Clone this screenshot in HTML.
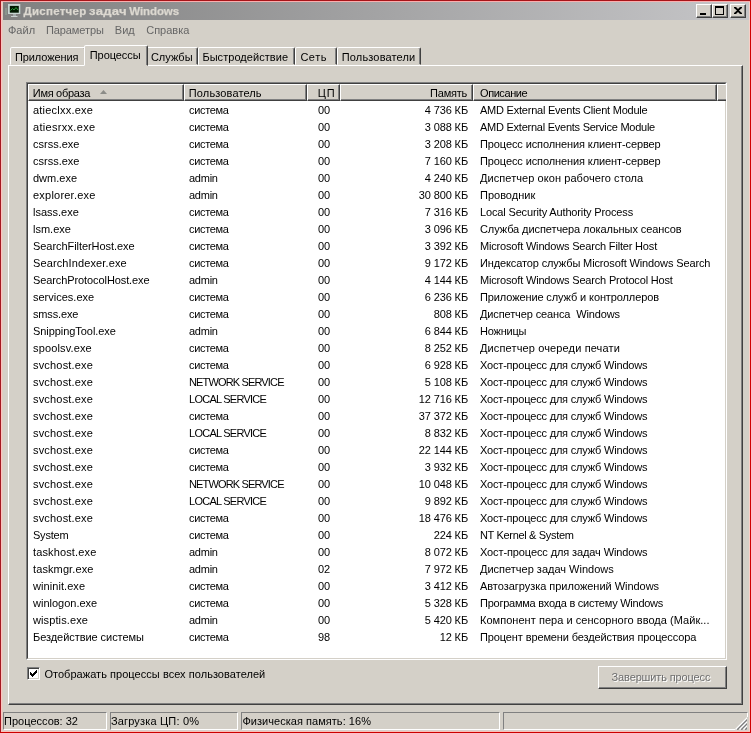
<!DOCTYPE html>
<html lang="ru"><head><meta charset="utf-8"><title>Диспетчер задач Windows</title>
<style>
*{box-sizing:border-box;margin:0;padding:0}
html,body{width:751px;height:733px;overflow:hidden;background:#d4d0c8}
body{position:relative;will-change:transform;font-family:"Liberation Sans",sans-serif;font-size:11px;color:#000;line-height:13px}
.a{position:absolute;white-space:pre}
.tt{color:#dcd8d0;-webkit-text-stroke:.25px #dcd8d0;font-weight:bold;font-size:11.5px;z-index:5;letter-spacing:.25px}
.mn{color:#666}
.tb{z-index:5}
.bt{color:#6e6e6e;text-shadow:1px 1px 0 #fff;z-index:5}
#title{left:3px;top:2px;width:746px;height:18px;background:linear-gradient(90deg,#808080,#c6c6c8)}
.cb{top:4px;width:16px;height:14px;background:#d4d0c8;border:1px solid;border-color:#fff #404040 #404040 #fff;box-shadow:inset -1px -1px 0 #808080}
.tab{top:47px;height:18px;border:1px solid;border-color:#fff #404040 transparent #fff;border-radius:2px 2px 0 0;box-shadow:inset -1px 0 0 #808080;background:#d4d0c8}
#tabsel{top:45px;height:21px;z-index:3}
#panel{left:8px;top:65px;width:735px;height:640px;border:1px solid;border-color:#fff #404040 #404040 #fff;box-shadow:inset -1px -1px 0 #808080}
#list{left:26px;top:82px;width:701px;height:578px;background:#fff;border:1px solid;border-color:#808080 #fff #fff #808080}
#listin{left:27px;top:83px;width:699px;height:576px;border:1px solid;border-color:#404040 #d4d0c8 #d4d0c8 #404040}
.hd{top:84px;height:17px;background:#d4d0c8;border:1px solid;border-color:#fff #404040 #404040 #fff;box-shadow:inset -1px -1px 0 #808080}
.r{left:0;height:17px;width:751px}
.r span{position:absolute;top:2px;white-space:pre}
.c1{left:33px}.c2{left:189px}.c3{left:318px}.c4{right:283px;text-align:right;letter-spacing:-0.12px}.c5{left:480px}
#chk{left:27px;top:667px;width:13px;height:13px;background:#fff;border:1px solid;border-color:#808080 #fff #fff #808080;box-shadow:inset 1px 1px 0 #404040,inset -1px -1px 0 #d4d0c8}
#btn{left:598px;top:666px;width:129px;height:23px;border:1px solid;border-color:#fff #404040 #404040 #fff;box-shadow:inset -1px -1px 0 #808080}
.sp{top:712px;height:18px;border:1px solid;border-color:#808080 #fff #fff #808080}
.red{background:#e60000;z-index:9}
.pk{background:#f6e4e0;z-index:8}
</style></head><body>

<div class="a" id="title"></div>
<svg class="a" style="left:5px;top:3px" width="18" height="16" viewBox="0 0 18 16"><rect x="0" y="5" width="2" height="7" fill="#90a898" opacity=".55"/><rect x="3" y="1" width="12.300" height="10" fill="#c6d4d0"/><rect x="4.800" y="2.900" width="9" height="6.800" fill="#001800"/><path d="M5.500 7.500 L7.500 5.500 L9 7 L11 4.500 L13 7" stroke="#2a9c3a" stroke-width="1" fill="none"/><rect x="8" y="11" width="3" height="2" fill="#a4acac"/><rect x="6" y="13" width="6.500" height="1" fill="#c8d0d0"/></svg>
<div class="a cb" style="left:696px"><svg width="14" height="12" style="display:block"><rect x="3" y="8" width="6" height="2" fill="#000"/></svg></div>
<div class="a cb" style="left:712px"><svg width="14" height="12" style="display:block"><rect x="2.5" y="1.5" width="8" height="8" fill="none" stroke="#000"/><rect x="2" y="1" width="9" height="2" fill="#000"/></svg></div>
<div class="a cb" style="left:730px"><svg width="14" height="12" style="display:block"><path d="M3 2h2l2 2 2-2h2v1l-3 2.500 3 2.500v1h-2l-2-2-2 2h-2v-1l3-2.500-3-2.500z" fill="#000"/></svg></div>
<div class="a" id="panel"></div>
<div class="a tab" style="left:10px;width:76px"></div>
<div class="a tab" style="left:146px;width:52px"></div>
<div class="a tab" style="left:198px;width:97px"></div>
<div class="a tab" style="left:295px;width:42px"></div>
<div class="a tab" style="left:337px;width:84px"></div>
<div class="a tab" id="tabsel" style="left:84px;width:64px"></div>
<div class="a" id="list"></div><div class="a" id="listin"></div>
<div class="a hd" style="left:28px;width:156px"></div>
<div class="a hd" style="left:184px;width:123px"></div>
<div class="a hd" style="left:307px;width:33px"></div>
<div class="a hd" style="left:340px;width:133px"></div>
<div class="a hd" style="left:473px;width:244px"></div>
<div class="a hd" style="left:717px;width:9px;border-right:0;box-shadow:inset 0 -1px 0 #808080"></div>
<svg class="a" style="left:100px;top:90px" width="7" height="4"><path d="M0 4 L3.5 0 L7 4 Z" fill="#8c8c88"/></svg>
<div class="a r" style="top:102px"><span class="c1" style="letter-spacing:0.218px">atieclxx.exe</span><span class="c2" style="letter-spacing:-0.333px">система</span><span class="c3">00</span><span class="c4">4 736 КБ</span><span class="c5" style="letter-spacing:-0.225px">AMD External Events Client Module</span></div>
<div class="a r" style="top:119px"><span class="c1" style="letter-spacing:0.309px">atiesrxx.exe</span><span class="c2" style="letter-spacing:-0.333px">система</span><span class="c3">00</span><span class="c4">3 088 КБ</span><span class="c5" style="letter-spacing:-0.248px">AMD External Events Service Module</span></div>
<div class="a r" style="top:136px"><span class="c1">csrss.exe</span><span class="c2" style="letter-spacing:-0.333px">система</span><span class="c3">00</span><span class="c4">3 208 КБ</span><span class="c5" style="letter-spacing:-0.103px">Процесс исполнения клиент-сервер</span></div>
<div class="a r" style="top:153px"><span class="c1">csrss.exe</span><span class="c2" style="letter-spacing:-0.333px">система</span><span class="c3">00</span><span class="c4">7 160 КБ</span><span class="c5" style="letter-spacing:-0.103px">Процесс исполнения клиент-сервер</span></div>
<div class="a r" style="top:170px"><span class="c1">dwm.exe</span><span class="c2" style="letter-spacing:-0.250px">admin</span><span class="c3">00</span><span class="c4">4 240 КБ</span><span class="c5" style="letter-spacing:0.071px">Диспетчер окон рабочего стола</span></div>
<div class="a r" style="top:187px"><span class="c1" style="letter-spacing:0.218px">explorer.exe</span><span class="c2" style="letter-spacing:-0.250px">admin</span><span class="c3">00</span><span class="c4">30 800 КБ</span><span class="c5">Проводник</span></div>
<div class="a r" style="top:204px"><span class="c1">lsass.exe</span><span class="c2" style="letter-spacing:-0.333px">система</span><span class="c3">00</span><span class="c4">7 316 КБ</span><span class="c5" style="letter-spacing:-0.148px">Local Security Authority Process</span></div>
<div class="a r" style="top:221px"><span class="c1">lsm.exe</span><span class="c2" style="letter-spacing:-0.333px">система</span><span class="c3">00</span><span class="c4">3 096 КБ</span><span class="c5" style="letter-spacing:-0.085px">Служба диспетчера локальных сеансов</span></div>
<div class="a r" style="top:238px"><span class="c1" style="letter-spacing:-0.058px">SearchFilterHost.exe</span><span class="c2" style="letter-spacing:-0.333px">система</span><span class="c3">00</span><span class="c4">3 392 КБ</span><span class="c5" style="letter-spacing:-0.177px">Microsoft Windows Search Filter Host</span></div>
<div class="a r" style="top:255px"><span class="c1" style="letter-spacing:0.119px">SearchIndexer.exe</span><span class="c2" style="letter-spacing:-0.333px">система</span><span class="c3">00</span><span class="c4">9 172 КБ</span><span class="c5" style="letter-spacing:-0.124px">Индексатор службы Microsoft Windows Search</span></div>
<div class="a r" style="top:272px"><span class="c1" style="letter-spacing:-0.095px">SearchProtocolHost.exe</span><span class="c2" style="letter-spacing:-0.250px">admin</span><span class="c3">00</span><span class="c4">4 144 КБ</span><span class="c5" style="letter-spacing:-0.173px">Microsoft Windows Search Protocol Host</span></div>
<div class="a r" style="top:289px"><span class="c1">services.exe</span><span class="c2" style="letter-spacing:-0.333px">система</span><span class="c3">00</span><span class="c4">6 236 КБ</span><span class="c5" style="letter-spacing:-0.110px">Приложение служб и контроллеров</span></div>
<div class="a r" style="top:306px"><span class="c1" style="letter-spacing:-0.157px">smss.exe</span><span class="c2" style="letter-spacing:-0.333px">система</span><span class="c3">00</span><span class="c4">808 КБ</span><span class="c5" style="letter-spacing:-0.121px">Диспетчер сеанса  Windows</span></div>
<div class="a r" style="top:323px"><span class="c1" style="letter-spacing:-0.060px">SnippingTool.exe</span><span class="c2" style="letter-spacing:-0.250px">admin</span><span class="c3">00</span><span class="c4">6 844 КБ</span><span class="c5" style="letter-spacing:-0.200px">Ножницы</span></div>
<div class="a r" style="top:340px"><span class="c1" style="letter-spacing:0.140px">spoolsv.exe</span><span class="c2" style="letter-spacing:-0.333px">система</span><span class="c3">00</span><span class="c4">8 252 КБ</span><span class="c5" style="letter-spacing:0.135px">Диспетчер очереди печати</span></div>
<div class="a r" style="top:357px"><span class="c1" style="letter-spacing:0.180px">svchost.exe</span><span class="c2" style="letter-spacing:-0.333px">система</span><span class="c3">00</span><span class="c4">6 928 КБ</span><span class="c5" style="letter-spacing:-0.186px">Хост-процесс для служб Windows</span></div>
<div class="a r" style="top:374px"><span class="c1" style="letter-spacing:0.180px">svchost.exe</span><span class="c2" style="letter-spacing:-0.850px">NETWORK SERVICE</span><span class="c3">00</span><span class="c4">5 108 КБ</span><span class="c5" style="letter-spacing:-0.186px">Хост-процесс для служб Windows</span></div>
<div class="a r" style="top:391px"><span class="c1" style="letter-spacing:0.180px">svchost.exe</span><span class="c2" style="letter-spacing:-0.742px">LOCAL SERVICE</span><span class="c3">00</span><span class="c4">12 716 КБ</span><span class="c5" style="letter-spacing:-0.186px">Хост-процесс для служб Windows</span></div>
<div class="a r" style="top:408px"><span class="c1" style="letter-spacing:0.180px">svchost.exe</span><span class="c2" style="letter-spacing:-0.333px">система</span><span class="c3">00</span><span class="c4">37 372 КБ</span><span class="c5" style="letter-spacing:-0.186px">Хост-процесс для служб Windows</span></div>
<div class="a r" style="top:425px"><span class="c1" style="letter-spacing:0.180px">svchost.exe</span><span class="c2" style="letter-spacing:-0.742px">LOCAL SERVICE</span><span class="c3">00</span><span class="c4">8 832 КБ</span><span class="c5" style="letter-spacing:-0.186px">Хост-процесс для служб Windows</span></div>
<div class="a r" style="top:442px"><span class="c1" style="letter-spacing:0.180px">svchost.exe</span><span class="c2" style="letter-spacing:-0.333px">система</span><span class="c3">00</span><span class="c4">22 144 КБ</span><span class="c5" style="letter-spacing:-0.186px">Хост-процесс для служб Windows</span></div>
<div class="a r" style="top:459px"><span class="c1" style="letter-spacing:0.180px">svchost.exe</span><span class="c2" style="letter-spacing:-0.333px">система</span><span class="c3">00</span><span class="c4">3 932 КБ</span><span class="c5" style="letter-spacing:-0.186px">Хост-процесс для служб Windows</span></div>
<div class="a r" style="top:476px"><span class="c1" style="letter-spacing:0.180px">svchost.exe</span><span class="c2" style="letter-spacing:-0.850px">NETWORK SERVICE</span><span class="c3">00</span><span class="c4">10 048 КБ</span><span class="c5" style="letter-spacing:-0.186px">Хост-процесс для служб Windows</span></div>
<div class="a r" style="top:493px"><span class="c1" style="letter-spacing:0.180px">svchost.exe</span><span class="c2" style="letter-spacing:-0.742px">LOCAL SERVICE</span><span class="c3">00</span><span class="c4">9 892 КБ</span><span class="c5" style="letter-spacing:-0.186px">Хост-процесс для служб Windows</span></div>
<div class="a r" style="top:510px"><span class="c1" style="letter-spacing:0.180px">svchost.exe</span><span class="c2" style="letter-spacing:-0.333px">система</span><span class="c3">00</span><span class="c4">18 476 КБ</span><span class="c5" style="letter-spacing:-0.186px">Хост-процесс для служб Windows</span></div>
<div class="a r" style="top:527px"><span class="c1" style="letter-spacing:-0.220px">System</span><span class="c2" style="letter-spacing:-0.333px">система</span><span class="c3">00</span><span class="c4">224 КБ</span><span class="c5" style="letter-spacing:-0.329px">NT Kernel &amp; System</span></div>
<div class="a r" style="top:544px"><span class="c1" style="letter-spacing:0.136px">taskhost.exe</span><span class="c2" style="letter-spacing:-0.250px">admin</span><span class="c3">00</span><span class="c4">8 072 КБ</span><span class="c5" style="letter-spacing:-0.110px">Хост-процесс для задач Windows</span></div>
<div class="a r" style="top:561px"><span class="c1" style="letter-spacing:0.110px">taskmgr.exe</span><span class="c2" style="letter-spacing:-0.250px">admin</span><span class="c3">02</span><span class="c4">7 972 КБ</span><span class="c5">Диспетчер задач Windows</span></div>
<div class="a r" style="top:578px"><span class="c1" style="letter-spacing:0.070px">wininit.exe</span><span class="c2" style="letter-spacing:-0.333px">система</span><span class="c3">00</span><span class="c4">3 412 КБ</span><span class="c5" style="letter-spacing:-0.033px">Автозагрузка приложений Windows</span></div>
<div class="a r" style="top:595px"><span class="c1">winlogon.exe</span><span class="c2" style="letter-spacing:-0.333px">система</span><span class="c3">00</span><span class="c4">5 328 КБ</span><span class="c5" style="letter-spacing:-0.250px">Программа входа в систему Windows</span></div>
<div class="a r" style="top:612px"><span class="c1" style="letter-spacing:0.110px">wisptis.exe</span><span class="c2" style="letter-spacing:-0.250px">admin</span><span class="c3">00</span><span class="c4">5 420 КБ</span><span class="c5" style="letter-spacing:0.037px">Компонент пера и сенсорного ввода (Майк...</span></div>
<div class="a r" style="top:629px"><span class="c1" style="letter-spacing:-0.056px">Бездействие системы</span><span class="c2" style="letter-spacing:-0.333px">система</span><span class="c3">98</span><span class="c4">12 КБ</span><span class="c5" style="letter-spacing:-0.119px">Процент времени бездействия процессора</span></div>
<div class="a" id="chk"><svg width="11" height="11" style="display:block"><path d="M2 4h1v3h-1zM3 5h1v3h-1zM4 6h1v3h-1zM5 5h1v3h-1zM6 4h1v3h-1zM7 3h1v3h-1zM8 2h1v3h-1z" fill="#000" shape-rendering="crispEdges"/></svg></div>
<div class="a" id="btn"></div>
<div class="a sp" style="left:3px;width:104px"></div>
<div class="a sp" style="left:110px;width:128px"></div>
<div class="a sp" style="left:241px;width:259px"></div>
<div class="a sp" style="left:503px;width:245px"></div>
<svg class="a" style="left:735px;top:717px;z-index:4" width="13" height="13" viewBox="0 0 13 13"><rect x="0" y="1" width="12" height="12" fill="#d4d0c8"/><path d="M2.0 12.500L12.500 2.0" stroke="#7c7c7c" stroke-width="2.1"/><path d="M6.0 12.500L12.500 6.0" stroke="#7c7c7c" stroke-width="2.1"/><path d="M10.0 12.500L12.500 10.0" stroke="#7c7c7c" stroke-width="2.1"/><path d="M0.5 12.500L12.500 0.5" stroke="#fff" stroke-width="1.2"/><path d="M4.5 12.500L12.500 4.5" stroke="#fff" stroke-width="1.2"/><path d="M8.5 12.500L12.500 8.5" stroke="#fff" stroke-width="1.2"/><rect x="12" y="0" width="1" height="13" fill="#d4d0c8"/></svg>
<div class="a mn" style="left:8.00px;top:24px">Файл</div>
<div class="a mn" style="left:46.00px;top:24px;letter-spacing:-0.100px">Параметры</div>
<div class="a mn" style="left:114.80px;top:24px">Вид</div>
<div class="a mn" style="left:146.20px;top:24px">Справка</div>
<div class="a tb" style="left:14.90px;top:51px;letter-spacing:-0.078px">Приложения</div>
<div class="a tb" style="left:89.80px;top:49px;letter-spacing:-0.086px">Процессы</div>
<div class="a tb" style="left:150.90px;top:51px">Службы</div>
<div class="a tb" style="left:202.40px;top:51px;letter-spacing:0.054px">Быстродействие</div>
<div class="a tb" style="left:300.40px;top:51px;letter-spacing:0.533px">Сеть</div>
<div class="a tb" style="left:341.80px;top:51px;letter-spacing:0.145px">Пользователи</div>
<div class="a tb" style="left:32.80px;top:87px;letter-spacing:-0.300px">Имя образа</div>
<div class="a tb" style="left:188.80px;top:87px;letter-spacing:0.127px">Пользователь</div>
<div class="a tb" style="left:317.80px;top:87px;letter-spacing:0.700px">ЦП</div>
<div class="a tb" style="left:430.10px;top:87px;letter-spacing:-0.240px">Память</div>
<div class="a tb" style="left:480.00px;top:87px;letter-spacing:-0.429px">Описание</div>
<div class="a tb" style="left:44.40px;top:668px;letter-spacing:0.043px">Отображать процессы всех пользователей</div>
<div class="a bt" style="left:611.60px;top:671px;letter-spacing:-0.138px">Завершить процесс</div>
<div class="a tb" style="left:4.10px;top:715px">Процессов: 32</div>
<div class="a tb" style="left:110.90px;top:715px;letter-spacing:0.179px">Загрузка ЦП: 0%</div>
<div class="a tb" style="left:242.40px;top:715px;letter-spacing:0.038px">Физическая память: 16%</div>
<div class="a tt" style="left:23.6px;top:5px">Диспетчер <span style="display:inline-block;transform:scaleX(1.140);transform-origin:0 50%;margin-left:-1px;margin-right:5.400px">задач</span> <span style="letter-spacing:-.08px;margin-left:-1.8px">Windows</span></div>
<div class="a" style="left:2px;top:2px;width:1px;height:729px;background:#e2ccbe;z-index:7"></div><div class="a" style="left:1px;top:1px;width:1px;height:731px;background:#fdc2c0;z-index:8"></div><div class="a" style="left:749px;top:1px;width:1px;height:731px;background:#fbcfc7;z-index:8"></div><div class="a" style="left:1px;top:1px;width:749px;height:1px;background:#fbaeae;z-index:8"></div><div class="a" style="left:1px;top:731px;width:749px;height:1px;background:#fcc0b8;z-index:8"></div><div class="a" style="left:1px;top:730px;width:749px;height:1px;background:#d8cecc;z-index:7"></div>
<div class="a" style="left:0px;top:0px;width:1px;height:733px;background:#a41820;z-index:9"></div><div class="a" style="left:750px;top:0px;width:1px;height:733px;background:#d00000;z-index:9"></div><div class="a" style="left:0px;top:0px;width:751px;height:1px;background:#a81418;z-index:9"></div><div class="a" style="left:0px;top:732px;width:751px;height:1px;background:#cc0000;z-index:9"></div>
</body></html>
